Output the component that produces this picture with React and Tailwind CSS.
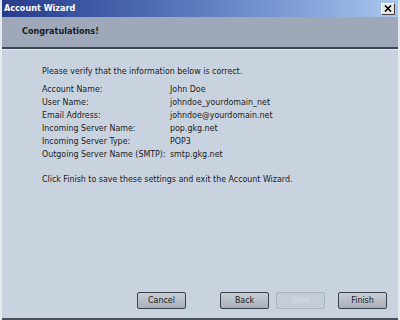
export default function App() {
  const rows = [
    ["Account Name:", "John Doe"],
    ["User Name:", "johndoe_yourdomain_net"],
    ["Email Address:", "johndoe@yourdomain.net"],
    ["Incoming Server Name:", "pop.gkg.net"],
    ["Incoming Server Type:", "POP3"],
    ["Outgoing Server Name (SMTP):", "smtp.gkg.net"],
  ];
  return (
    <div
      className="w-[400px] h-[320px] flex flex-col bg-[#c9d3df] border-l-2 border-r-2 border-[#e4e9ef] text-[8.8px] text-[#1a1a1a] overflow-hidden"
      style={{ fontFamily: '"DejaVu Sans Condensed", "Liberation Sans", Arial, sans-serif' }}
    >
      <div className="h-[17px] flex items-center justify-between pl-[2px] pr-[3px] bg-gradient-to-r from-[#263c8c] via-[#5c7cc0] to-[#a9c6ee]">
        <span className="text-white font-bold text-[9px] leading-none">Account Wizard</span>
        <div className="w-[14px] h-[12px] bg-[#e6e6e6] border border-t-white border-l-white border-r-[#404040] border-b-[#404040] flex items-center justify-center">
          <svg width="8" height="7" viewBox="0 0 8 7">
            <path d="M1 0.5 L7 6.5 M7 0.5 L1 6.5" stroke="#000" strokeWidth="1.6" />
          </svg>
        </div>
      </div>
      <div className="h-[32px] bg-[#9ea8b8] flex items-center pl-[20px] border-b-2 border-[#3d4452]">
        <span className="font-bold text-[9px]">Congratulations!</span>
      </div>
      <div className="h-px bg-[#e2e7ee]" />
      <div className="flex-1 flex flex-col pl-[40px] pt-[15px]">
        <div className="leading-[13px] whitespace-nowrap">Please verify that the information below is correct.</div>
        <div className="mt-[5px] flex flex-col">
          {rows.map(([k, v]) => (
            <div key={k} className="flex leading-[13px] whitespace-nowrap">
              <span className="w-[128px] shrink-0">{k}</span>
              <span>{v}</span>
            </div>
          ))}
        </div>
        <div className="mt-[12px] leading-[13px] whitespace-nowrap">
          Click Finish to save these settings and exit the Account Wizard.
        </div>
        <div className="flex-1" />
        <div className="flex items-center mb-[9px] pl-[95px]">
          <button className="w-[49px] h-[17px] rounded-[2px] border border-[#3a3f48] bg-gradient-to-b from-[#c8cdd5] to-[#a9b0bb] text-[8.8px] leading-none">
            Cancel
          </button>
          <button className="ml-[34px] w-[49px] h-[17px] rounded-[2px] border border-[#3a3f48] bg-gradient-to-b from-[#c8cdd5] to-[#a9b0bb] text-[8.8px] leading-none">
            Back
          </button>
          <button className="ml-[7px] w-[49px] h-[17px] rounded-[2px] border border-[#aab3c0] bg-[#c5cdd8] text-[#d8dde5] text-[8.8px] leading-none">
            Next
          </button>
          <button className="ml-[13px] w-[49px] h-[17px] rounded-[2px] border border-[#3a3f48] bg-gradient-to-b from-[#c8cdd5] to-[#a9b0bb] text-[8.8px] leading-none">
            Finish
          </button>
        </div>
      </div>
      <div className="h-[2px] bg-[#4a4f58]" />
    </div>
  );
}
